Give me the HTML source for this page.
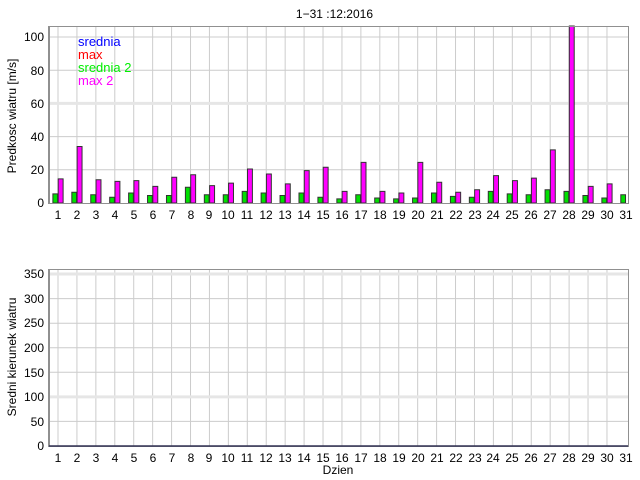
<!DOCTYPE html>
<html><head><meta charset="utf-8"><style>
html,body{margin:0;padding:0;background:#fff;width:640px;height:480px;overflow:hidden}
svg{display:block;font-family:"Liberation Sans",sans-serif}
</style></head><body>
<svg width="640" height="480" viewBox="0 0 640 480" xmlns="http://www.w3.org/2000/svg">
<text x="373" y="18" font-size="12" text-anchor="end" fill="#000">1−31 :12:2016</text>
<!-- top chart -->
<g stroke="#cccccc" stroke-width="1" transform="translate(58,0) scale(18.93,1)">
<path vector-effect="non-scaling-stroke" d="M0 26V203M1 26V203M2 26V203M3 26V203M4 26V203M5 26V203M6 26V203M7 26V203M8 26V203M9 26V203M10 26V203M11 26V203M12 26V203M13 26V203M14 26V203M15 26V203M16 26V203M17 26V203M18 26V203M19 26V203M20 26V203M21 26V203M22 26V203M23 26V203M24 26V203M25 26V203M26 26V203M27 26V203M28 26V203M29 26V203"/>
</g>
<path stroke="#cccccc" d="M49 169.8H628M49 136.6H628M49 70.2H628M49 37H628"/>
<path stroke="#e6e6e6" stroke-width="3" d="M49 103.4H628"/>
<g transform="translate(58,203) scale(18.93,-1.66)" stroke="#333" stroke-width="1">
<g fill="#00e000">
<rect vector-effect="non-scaling-stroke" x="-0.27" width="0.25" y="0" height="5.5"/>
<rect vector-effect="non-scaling-stroke" x="0.73" width="0.25" y="0" height="6.5"/>
<rect vector-effect="non-scaling-stroke" x="1.73" width="0.25" y="0" height="5"/>
<rect vector-effect="non-scaling-stroke" x="2.73" width="0.25" y="0" height="3.5"/>
<rect vector-effect="non-scaling-stroke" x="3.73" width="0.25" y="0" height="6"/>
<rect vector-effect="non-scaling-stroke" x="4.73" width="0.25" y="0" height="4.5"/>
<rect vector-effect="non-scaling-stroke" x="5.73" width="0.25" y="0" height="4.5"/>
<rect vector-effect="non-scaling-stroke" x="6.73" width="0.25" y="0" height="9.5"/>
<rect vector-effect="non-scaling-stroke" x="7.73" width="0.25" y="0" height="5"/>
<rect vector-effect="non-scaling-stroke" x="8.73" width="0.25" y="0" height="5"/>
<rect vector-effect="non-scaling-stroke" x="9.73" width="0.25" y="0" height="7"/>
<rect vector-effect="non-scaling-stroke" x="10.73" width="0.25" y="0" height="6"/>
<rect vector-effect="non-scaling-stroke" x="11.73" width="0.25" y="0" height="4.5"/>
<rect vector-effect="non-scaling-stroke" x="12.73" width="0.25" y="0" height="6"/>
<rect vector-effect="non-scaling-stroke" x="13.73" width="0.25" y="0" height="3.5"/>
<rect vector-effect="non-scaling-stroke" x="14.73" width="0.25" y="0" height="2.5"/>
<rect vector-effect="non-scaling-stroke" x="15.73" width="0.25" y="0" height="5"/>
<rect vector-effect="non-scaling-stroke" x="16.73" width="0.25" y="0" height="3"/>
<rect vector-effect="non-scaling-stroke" x="17.73" width="0.25" y="0" height="2.5"/>
<rect vector-effect="non-scaling-stroke" x="18.73" width="0.25" y="0" height="3"/>
<rect vector-effect="non-scaling-stroke" x="19.73" width="0.25" y="0" height="6"/>
<rect vector-effect="non-scaling-stroke" x="20.73" width="0.25" y="0" height="4"/>
<rect vector-effect="non-scaling-stroke" x="21.73" width="0.25" y="0" height="3.5"/>
<rect vector-effect="non-scaling-stroke" x="22.73" width="0.25" y="0" height="7"/>
<rect vector-effect="non-scaling-stroke" x="23.73" width="0.25" y="0" height="5.5"/>
<rect vector-effect="non-scaling-stroke" x="24.73" width="0.25" y="0" height="5"/>
<rect vector-effect="non-scaling-stroke" x="25.73" width="0.25" y="0" height="8"/>
<rect vector-effect="non-scaling-stroke" x="26.73" width="0.25" y="0" height="7"/>
<rect vector-effect="non-scaling-stroke" x="27.73" width="0.25" y="0" height="4.5"/>
<rect vector-effect="non-scaling-stroke" x="28.73" width="0.25" y="0" height="3"/>
<rect vector-effect="non-scaling-stroke" x="29.73" width="0.25" y="0" height="5"/>
</g>
<g fill="#ff00ff">
<rect vector-effect="non-scaling-stroke" x="0.01" width="0.26" y="0" height="14.5"/>
<rect vector-effect="non-scaling-stroke" x="1.01" width="0.26" y="0" height="34"/>
<rect vector-effect="non-scaling-stroke" x="2.01" width="0.26" y="0" height="14"/>
<rect vector-effect="non-scaling-stroke" x="3.01" width="0.26" y="0" height="13"/>
<rect vector-effect="non-scaling-stroke" x="4.01" width="0.26" y="0" height="13.5"/>
<rect vector-effect="non-scaling-stroke" x="5.01" width="0.26" y="0" height="10"/>
<rect vector-effect="non-scaling-stroke" x="6.01" width="0.26" y="0" height="15.5"/>
<rect vector-effect="non-scaling-stroke" x="7.01" width="0.26" y="0" height="17"/>
<rect vector-effect="non-scaling-stroke" x="8.01" width="0.26" y="0" height="10.5"/>
<rect vector-effect="non-scaling-stroke" x="9.01" width="0.26" y="0" height="12"/>
<rect vector-effect="non-scaling-stroke" x="10.01" width="0.26" y="0" height="20.5"/>
<rect vector-effect="non-scaling-stroke" x="11.01" width="0.26" y="0" height="17.5"/>
<rect vector-effect="non-scaling-stroke" x="12.01" width="0.26" y="0" height="11.5"/>
<rect vector-effect="non-scaling-stroke" x="13.01" width="0.26" y="0" height="19.5"/>
<rect vector-effect="non-scaling-stroke" x="14.01" width="0.26" y="0" height="21.5"/>
<rect vector-effect="non-scaling-stroke" x="15.01" width="0.26" y="0" height="7"/>
<rect vector-effect="non-scaling-stroke" x="16.01" width="0.26" y="0" height="24.5"/>
<rect vector-effect="non-scaling-stroke" x="17.01" width="0.26" y="0" height="7"/>
<rect vector-effect="non-scaling-stroke" x="18.01" width="0.26" y="0" height="6"/>
<rect vector-effect="non-scaling-stroke" x="19.01" width="0.26" y="0" height="24.5"/>
<rect vector-effect="non-scaling-stroke" x="20.01" width="0.26" y="0" height="12.5"/>
<rect vector-effect="non-scaling-stroke" x="21.01" width="0.26" y="0" height="6.5"/>
<rect vector-effect="non-scaling-stroke" x="22.01" width="0.26" y="0" height="8"/>
<rect vector-effect="non-scaling-stroke" x="23.01" width="0.26" y="0" height="16.5"/>
<rect vector-effect="non-scaling-stroke" x="24.01" width="0.26" y="0" height="13.5"/>
<rect vector-effect="non-scaling-stroke" x="25.01" width="0.26" y="0" height="15"/>
<rect vector-effect="non-scaling-stroke" x="26.01" width="0.26" y="0" height="32"/>
<rect vector-effect="non-scaling-stroke" x="27.01" width="0.26" y="0" height="106.6"/>
<rect vector-effect="non-scaling-stroke" x="28.01" width="0.26" y="0" height="10"/>
<rect vector-effect="non-scaling-stroke" x="29.01" width="0.26" y="0" height="11.5"/>
</g>
</g>
<path fill="none" stroke="#909090" d="M48.5 26.5H628.5V203.5H48.5Z"/>
<path stroke="#909090" stroke-width="2" d="M49 26V204"/>
<g font-size="12" fill="#000" text-anchor="end">
<text x="44" y="207">0</text><text x="44" y="174">20</text><text x="44" y="141">40</text>
<text x="44" y="108">60</text><text x="44" y="75">80</text><text x="44" y="41">100</text>
</g>
<text transform="translate(16,116) rotate(-90)" font-size="12" text-anchor="middle">Predkosc wiatru [m/s]</text>
<g font-size="13">
<text x="78" y="46" fill="#0000ff">srednia</text>
<text x="78" y="59" fill="#ff0000">max</text>
<text x="78" y="72" fill="#00ee00">srednia 2</text>
<text x="78" y="85" fill="#ff00ff">max 2</text>
</g>
<g font-size="12" text-anchor="middle">
<text x="58" y="219">1</text><text x="77" y="219">2</text><text x="96" y="219">3</text><text x="115" y="219">4</text><text x="134" y="219">5</text><text x="153" y="219">6</text><text x="172" y="219">7</text><text x="191" y="219">8</text><text x="209" y="219">9</text><text x="228" y="219">10</text><text x="247" y="219">11</text><text x="266" y="219">12</text><text x="285" y="219">13</text><text x="304" y="219">14</text><text x="323" y="219">15</text><text x="342" y="219">16</text><text x="361" y="219">17</text><text x="380" y="219">18</text><text x="399" y="219">19</text><text x="418" y="219">20</text><text x="437" y="219">21</text><text x="456" y="219">22</text><text x="475" y="219">23</text><text x="493" y="219">24</text><text x="512" y="219">25</text><text x="531" y="219">26</text><text x="550" y="219">27</text><text x="569" y="219">28</text><text x="588" y="219">29</text><text x="607" y="219">30</text><text x="626" y="219">31</text>
</g>
<!-- bottom chart -->
<g stroke="#cccccc" transform="translate(58,0) scale(18.93,1)">
<path vector-effect="non-scaling-stroke" d="M0 269V446M1 269V446M2 269V446M3 269V446M4 269V446M5 269V446M6 269V446M7 269V446M8 269V446M9 269V446M10 269V446M11 269V446M12 269V446M13 269V446M14 269V446M15 269V446M16 269V446M17 269V446M18 269V446M19 269V446M20 269V446M21 269V446M22 269V446M23 269V446M24 269V446M25 269V446M26 269V446M27 269V446M28 269V446M29 269V446"/>
</g>
<path stroke="#cccccc" d="M49 421.4H628M49 372.3H628M49 347.7H628M49 323.2H628M49 298.6H628"/>
<path stroke="#e6e6e6" stroke-width="3" d="M49 396.9H628M49 274H628"/>
<path fill="none" stroke="#909090" d="M48.5 269.5H628.5V446.5H48.5Z"/>
<path stroke="#909090" stroke-width="2" d="M49 269V447"/>
<path stroke="#333355" stroke-width="1.5" d="M49 446H628"/>
<g font-size="12" fill="#000" text-anchor="end">
<text x="44" y="450">0</text><text x="44" y="426">50</text><text x="44" y="401">100</text>
<text x="44" y="377">150</text><text x="44" y="352">200</text><text x="44" y="327">250</text>
<text x="44" y="303">300</text><text x="44" y="278">350</text>
</g>
<text transform="translate(16,357) rotate(-90)" font-size="12" text-anchor="middle">Sredni kierunek wiatru</text>
<g font-size="12" text-anchor="middle">
<text x="58" y="462">1</text><text x="77" y="462">2</text><text x="96" y="462">3</text><text x="115" y="462">4</text><text x="134" y="462">5</text><text x="153" y="462">6</text><text x="172" y="462">7</text><text x="191" y="462">8</text><text x="209" y="462">9</text><text x="228" y="462">10</text><text x="247" y="462">11</text><text x="266" y="462">12</text><text x="285" y="462">13</text><text x="304" y="462">14</text><text x="323" y="462">15</text><text x="342" y="462">16</text><text x="361" y="462">17</text><text x="380" y="462">18</text><text x="399" y="462">19</text><text x="418" y="462">20</text><text x="437" y="462">21</text><text x="456" y="462">22</text><text x="475" y="462">23</text><text x="493" y="462">24</text><text x="512" y="462">25</text><text x="531" y="462">26</text><text x="550" y="462">27</text><text x="569" y="462">28</text><text x="588" y="462">29</text><text x="607" y="462">30</text><text x="626" y="462">31</text>
</g>
<text x="338" y="474" font-size="12" text-anchor="middle">Dzien</text>
</svg>
</body></html>
